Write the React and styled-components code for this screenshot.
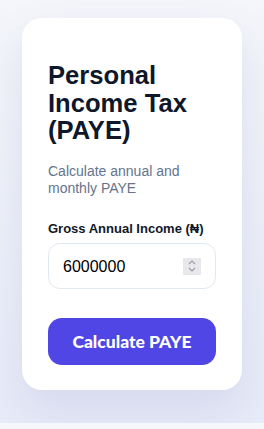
import styled, { createGlobalStyle } from "styled-components";

const GlobalStyle = createGlobalStyle`
  html, body {
    margin: 0;
    padding: 0;
    background: #f5f7fb;
    font-family: "Liberation Sans", Arial, sans-serif;
  }
`;

function App() {
  return (
    <>
      <GlobalStyle />
      <Page>
        <Card>
          <Title>Personal Income Tax (PAYE)</Title>
          <Subtitle>Calculate annual and monthly PAYE</Subtitle>
          <Label htmlFor="gross">Gross Annual Income (₦)</Label>
          <InputWrap>
            <Input id="gross" defaultValue="6000000" readOnly />
            <Spinner>
              <svg width="10" height="14" viewBox="0 0 10 14" fill="none">
                <path d="M2 5 L5 2 L8 5" stroke="#9aa0a6" strokeWidth="1.2" />
                <path d="M2 9 L5 12 L8 9" stroke="#9aa0a6" strokeWidth="1.2" />
              </svg>
            </Spinner>
          </InputWrap>
          <Button>Calculate PAYE</Button>
        </Card>
      </Page>
    </>
  );
}

const Page = styled.div`
  height: 423px;
  box-sizing: border-box;
  padding: 18px 22px 0;
  background: linear-gradient(180deg, #f4f6fa 0%, #e8ebf8 100%);
`;

const Card = styled.div`
  background: #fff;
  border-radius: 20px;
  padding: 44px 26px 25px;
  display: flex;
  flex-direction: column;
  box-shadow: 0 20px 45px rgba(90, 100, 170, 0.14);
`;

const Title = styled.h1`
  margin: 0;
  font-size: 25.6px;
  line-height: 27.5px;
  font-weight: 700;
  color: #0f172a;
`;

const Subtitle = styled.p`
  margin: 18.5px 0 0;
  font-size: 14px;
  line-height: 17px;
  color: #64748b;
`;

const Label = styled.label`
  margin-top: 24px;
  font-size: 13px;
  line-height: 15px;
  font-weight: 700;
  color: #111827;
`;

const InputWrap = styled.div`
  margin-top: 7px;
  height: 46px;
  box-sizing: border-box;
  border: 1px solid #e2e8f0;
  border-radius: 12px;
  display: flex;
  align-items: center;
  padding: 2px 14px 0 14px;
`;

const Input = styled.input`
  flex: 1;
  min-width: 0;
  border: none;
  outline: none;
  font-family: "Liberation Sans", Arial, sans-serif;
  font-size: 16px;
  color: #000;
  padding: 0;
  background: transparent;
`;

const Spinner = styled.div`
  width: 18px;
  height: 17px;
  margin-top: -2px;
  background: #e8e8ec;
  display: flex;
  align-items: center;
  justify-content: center;
`;

const Button = styled.button`
  margin-top: 29px;
  height: 47px;
  border: none;
  border-radius: 14px;
  background: #4f46e5;
  color: #fff;
  font-family: Lato, sans-serif;
  font-weight: 900;
  font-size: 17.5px;
`;

export default App;
